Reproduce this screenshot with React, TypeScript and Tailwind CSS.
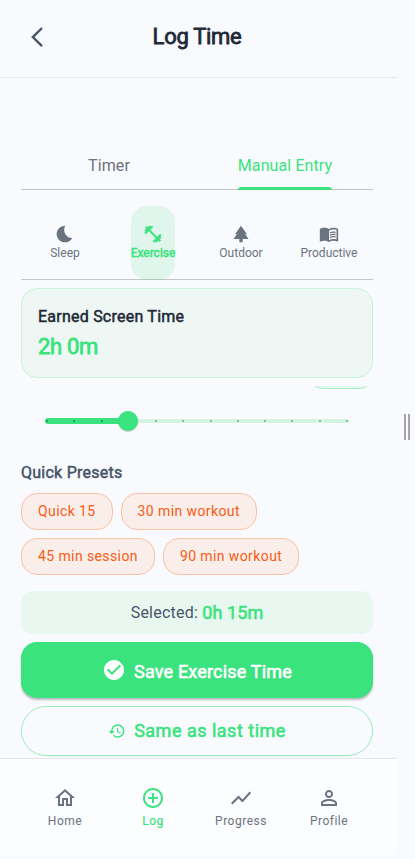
import React from "react";
import type { IconType } from "react-icons";
import {
  MdAddCircleOutline,
  MdBedtime,
  MdCheckCircle,
  MdHistory,
  MdMenuBook,
  MdOutlineHome,
  MdPark,
  MdPersonOutline,
  MdShowChart,
} from "react-icons/md";

function Dumbbell({ className }: { className?: string }) {
  return (
    <svg viewBox="0 0 24 24" fill="currentColor" stroke="currentColor" strokeWidth="0.6" className={className}>
      <path d="M20.57 14.86 22 13.43 20.57 12 17 15.57 8.43 7 12 3.43 10.57 2 9.14 3.43 7.71 2 5.57 4.14 4.14 2.71 2.71 4.14l1.43 1.43L2 7.71l1.43 1.43L2 10.57 3.43 12 7 8.43 15.57 17 12 20.57 13.43 22l1.43-1.43L16.29 22l2.14-2.14 1.43 1.43 1.43-1.43-1.43-1.43L22 16.29z" />
    </svg>
  );
}

type Item = {
  label: string;
  Icon: IconType | typeof Dumbbell;
  active?: boolean;
};

const categories: Item[] = [
  { label: "Sleep", Icon: MdBedtime },
  { label: "Exercise", Icon: Dumbbell, active: true },
  { label: "Outdoor", Icon: MdPark },
  { label: "Productive", Icon: MdMenuBook },
];

const navItems: Item[] = [
  { label: "Home", Icon: MdOutlineHome },
  { label: "Log", Icon: MdAddCircleOutline, active: true },
  { label: "Progress", Icon: MdShowChart },
  { label: "Profile", Icon: MdPersonOutline },
];

const presets = ["Quick 15", "30 min workout", "45 min session", "90 min workout"];

function Header() {
  return (
    <header className="flex h-[78px] shrink-0 items-start border-b border-[#e5e7eb] pt-[25px]">
      <svg viewBox="0 0 24 24" className="ml-[25px] h-6 w-6" fill="none" stroke="#475569" strokeWidth="2.4">
        <path d="M17 3 7.8 12.1 17 21.2" />
      </svg>
      <h1 className="flex-1 pr-[52px] text-center text-[22px] leading-6 tracking-[-0.3px] text-[#1f2937] [-webkit-text-stroke:0.8px_#1f2937]">
        Log Time
      </h1>
    </header>
  );
}

function Tabs() {
  return (
    <div className="flex h-[49px] border-b border-[#c1c7be] text-base tracking-[0.1px]">
      <div className="flex flex-1 justify-center">
        <span className="pt-[13px] text-[#6b7280]">Timer</span>
      </div>
      <div className="flex flex-1 justify-center">
        <span className="relative h-[49px] pt-[13px] text-[#3ae37d]">
          Manual Entry
          <span className="absolute inset-x-0 bottom-0 h-[3px] rounded-t-[3px] bg-[#3ae37d]" />
        </span>
      </div>
    </div>
  );
}

function Categories() {
  return (
    <div className="mt-4 flex h-[74px] border-b border-[#c1c7be]">
      {categories.map(({ label, Icon, active }) => (
        <div key={label} className="flex flex-1 justify-center">
          <div
            className={
              active
                ? "flex h-[74px] w-11 flex-col items-center rounded-2xl bg-[#3ae37d]/13 pt-[18px] text-[#3ae37d]"
                : "flex flex-col items-center pt-[18px] text-[#6b7280]"
            }
          >
            <Icon className="h-5 w-5" />
            <span
              className={
                active
                  ? "mt-px text-xs leading-4 whitespace-nowrap [-webkit-text-stroke:0.5px_#3ae37d]"
                  : "mt-px text-xs leading-4 whitespace-nowrap"
              }
            >
              {label}
            </span>
          </div>
        </div>
      ))}
    </div>
  );
}

function Slider() {
  return (
    <div className="mx-6 mt-[22px] flex h-5 items-center">
      <div className="relative flex h-5 w-[304px] items-center">
        <div className="h-1.5 w-[83px] rounded-l-full bg-[#3ae37d]" />
        <div className="h-1 flex-1 rounded-r-full bg-[#d3f4e0]" />
        <div className="absolute inset-x-px flex justify-between">
          {Array.from({ length: 12 }, (_, i) => (
            <span
              key={i}
              className={i < 3 ? "h-0.5 w-0.5 rounded-full bg-[#1f8a4e]" : "h-0.5 w-0.5 bg-[#92b7a0]"}
            />
          ))}
        </div>
        <div className="absolute left-[73px] h-5 w-5 rounded-full bg-[#3ae37d] shadow-[0_1px_1px_rgba(0,0,0,0.2)]" />
      </div>
    </div>
  );
}

export default function App() {
  return (
    <div className="flex h-[859px] w-[415px] items-center overflow-hidden bg-[#f9fafd] font-[Roboto,sans-serif]">
      <div className="flex h-[859px] w-[397px] flex-col">
        <Header />
        <main className="flex h-[680px] shrink-0 flex-col overflow-hidden pl-[21px] pr-6 pt-[63px]">
          <Tabs />
          <Categories />

          <section className="mt-2 h-[90px] shrink-0 rounded-2xl border border-[#caf3da] bg-[#eff7f4] px-4 pt-[17px]">
            <h2 className="text-base leading-[22px] tracking-[0.23px] text-[#1f2937] [-webkit-text-stroke:0.5px_#1f2937]">
              Earned Screen Time
            </h2>
            <p className="mt-1 text-[22px] leading-[30px] tracking-[-0.3px] text-[#3ae37d] [-webkit-text-stroke:0.8px_#3ae37d]">
              2h 0m
            </p>
          </section>

          <div className="mt-2 flex h-[3px] shrink-0 items-end justify-end overflow-hidden pr-px">
            <div className="h-8 w-[62px] shrink-0 rounded-xl border border-[#a9efc4] bg-[#e4f7ed]" />
          </div>

          <Slider />

          <h3 className="mt-[30px] text-base leading-6 tracking-[0.25px] text-[#475569] [-webkit-text-stroke:0.5px_#475569]">
            Quick Presets
          </h3>
          <div className="mt-2 flex flex-wrap gap-2">
            {presets.map((preset) => (
              <button
                key={preset}
                className="h-[37px] rounded-2xl border border-[#fbc1a8] bg-[#f9eee9] px-4 pb-0.5 text-sm tracking-[0.4px] text-[#fb5a15]"
              >
                {preset}
              </button>
            ))}
          </div>

          <div className="mt-4 flex h-[43px] shrink-0 items-center justify-center gap-1 rounded-xl bg-[#e8f8f0]">
            <span className="text-base tracking-[0.25px] text-[#475569]">Selected:</span>
            <span className="text-lg tracking-[0.1px] text-[#3ae37d] [-webkit-text-stroke:0.6px_#3ae37d]">0h 15m</span>
          </div>

          <button className="mt-2 flex h-14 shrink-0 items-center justify-center gap-2 rounded-2xl bg-[#3ae37d] text-lg text-white shadow-[0_2px_2px_rgba(0,0,0,0.25)]">
            <MdCheckCircle className="h-6 w-6" />
            <span className="pt-1 tracking-[0.18px] [-webkit-text-stroke:0.6px_white]">Save Exercise Time</span>
          </button>

          <button className="mt-2 flex h-[50px] shrink-0 items-center justify-center gap-2 rounded-full border border-[#98edb9] text-lg text-[#3ae37d]">
            <MdHistory className="h-[18px] w-[18px]" />
            <span className="tracking-[0.5px] [-webkit-text-stroke:0.6px_#3ae37d]">Same as last time</span>
          </button>
        </main>

        <nav className="flex h-[97px] shrink-0 border-t border-[#e5e7eb] bg-[#fcfdfe] pl-[21px] pr-6 pt-[27px]">
          {navItems.map(({ label, Icon, active }) => (
            <div
              key={label}
              className={
                active
                  ? "flex flex-1 flex-col items-center text-[#3ae37d]"
                  : "flex flex-1 flex-col items-center text-[#6b7280]"
              }
            >
              <Icon className="h-6 w-6" />
              <span
                className={
                  active
                    ? "mt-[3px] text-xs leading-4 tracking-[0.5px] [-webkit-text-stroke:0.2px_#3ae37d]"
                    : "mt-[3px] text-xs leading-4 tracking-[0.5px]"
                }
              >
                {label}
              </span>
            </div>
          ))}
        </nav>
        <div className="h-1 shrink-0" />
      </div>
      <div className="flex h-full flex-1 items-start justify-end gap-0.5 pr-[5px] pt-[414px]">
        <span className="h-[26px] w-0.5 bg-[#a6a6a6]" />
        <span className="h-[26px] w-0.5 bg-[#a6a6a6]" />
      </div>
    </div>
  );
}
